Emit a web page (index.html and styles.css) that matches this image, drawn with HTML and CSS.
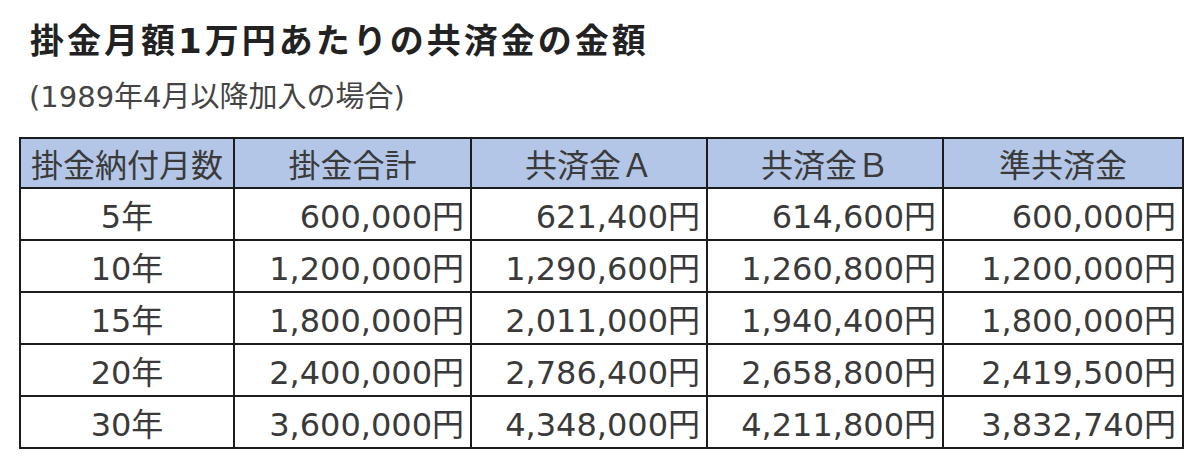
FILE: index.html
```html
<!DOCTYPE html>
<html lang="ja">
<head>
<meta charset="utf-8">
<link rel="stylesheet" href="styles.css">
</head>
<body>
<div class="page">
  <h1 class="title">掛金月額1万円あたりの共済金の金額</h1>
  <p class="subtitle">(1989年4月以降加入の場合)</p>
  <table class="grid">
    <colgroup>
      <col class="c1"><col class="c2"><col class="c3"><col class="c4"><col class="c5">
    </colgroup>
    <thead>
      <tr><th>掛金納付月数</th><th>掛金合計</th><th>共済金Ａ</th><th>共済金Ｂ</th><th>準共済金</th></tr>
    </thead>
    <tbody>
      <tr><td class="yr">5年</td><td>600,000円</td><td>621,400円</td><td>614,600円</td><td>600,000円</td></tr>
      <tr><td class="yr">10年</td><td>1,200,000円</td><td>1,290,600円</td><td>1,260,800円</td><td>1,200,000円</td></tr>
      <tr><td class="yr">15年</td><td>1,800,000円</td><td>2,011,000円</td><td>1,940,400円</td><td>1,800,000円</td></tr>
      <tr><td class="yr">20年</td><td>2,400,000円</td><td>2,786,400円</td><td>2,658,800円</td><td>2,419,500円</td></tr>
      <tr><td class="yr">30年</td><td>3,600,000円</td><td>4,348,000円</td><td>4,211,800円</td><td>3,832,740円</td></tr>
    </tbody>
  </table>
</div>
</body>
</html>
```
FILE: styles.css
```css
html, body {
  margin: 0;
  padding: 0;
  background: #ffffff;
}
.page {
  font-family: "DejaVu Sans", "Noto Sans CJK JP", sans-serif;
  color: #333333;
  padding: 21px 0 0 19px;
}
.title {
  margin: 0 0 0 11px;
  font-size: 34px;
  line-height: 40px;
  font-weight: bold;
  letter-spacing: 3px;
  color: #222222;
}
.subtitle {
  margin: 20px 0 0 10px;
  font-size: 29px;
  line-height: 32px;
  color: #444444;
}
.grid {
  margin-top: 24px;
  border-collapse: collapse;
  table-layout: fixed;
  width: 1163px;
  border: 2px solid #1c1c1c;
  font-size: 32px;
}
.c1 { width: 214px; }
.c2 { width: 237px; }
.c3 { width: 236px; }
.c4 { width: 236px; }
.c5 { width: 240px; }
.grid th, .grid td {
  border: 2px solid #1c1c1c;
  padding: 0 6px;
  white-space: nowrap;
  overflow: hidden;
  color: #3a3a3a;
}
.grid th {
  height: 48px;
  background: #b4c6e7;
  font-weight: normal;
  text-align: center;
  padding: 0 2px;
}
.grid td {
  height: 50px;
  text-align: right;
}
.grid td.yr {
  text-align: center;
}
```
